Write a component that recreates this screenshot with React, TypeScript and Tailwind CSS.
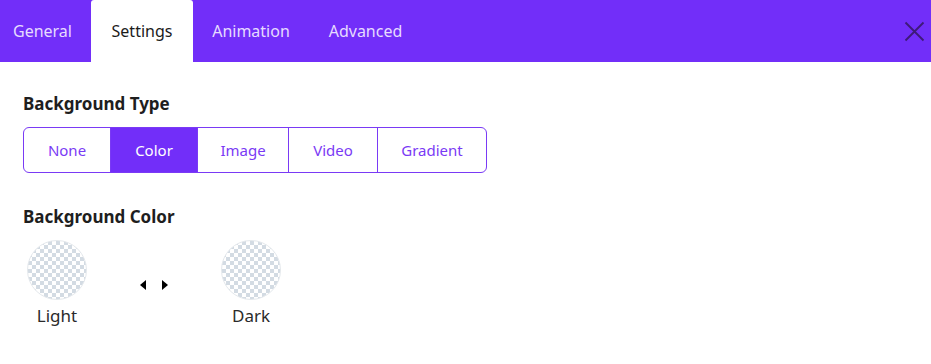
import { useState } from "react"

const tabs = [
	{ label: "General", w: "w-[97px]" },
	{ label: "Settings", w: "w-[102px]" },
	{ label: "Animation", w: "w-[116px]" },
	{ label: "Advanced", w: "w-[113px]" }
]

const bgTypes = [
	{ label: "None", w: "w-[86px]" },
	{ label: "Color", w: "w-[87px]" },
	{ label: "Image", w: "w-[91px]" },
	{ label: "Video", w: "w-[89px]" },
	{ label: "Gradient", w: "w-[109px]" }
]

const Swatch = ({ label }: { label: string }) => (
	<div className="flex flex-col items-center w-[60px]">
		<div className="w-[60px] h-[60px] rounded-full border border-[#e4e8ec] bg-[conic-gradient(#d3dbe3_25%,#ffffff_0_50%,#d3dbe3_0_75%,#ffffff_0)] bg-size-[8px_8px]" />
		<span className="mt-[4px] text-[17px] leading-[24px] text-[#2a2a2a]">
			{label}
		</span>
	</div>
)

const App = () => {
	const [activeTab, setActiveTab] = useState("Settings")
	const [bgType, setBgType] = useState("Color")

	return (
		<div className="w-[931px] h-[364px] bg-white font-['Noto_Sans','Open_Sans',sans-serif] overflow-hidden">
			<div className="h-[62px] bg-[#722ef9] flex items-stretch justify-between">
				<div className="flex items-stretch -ml-[6px]">
					{tabs.map(tab => (
						<button
							key={tab.label}
							onClick={() => setActiveTab(tab.label)}
							className={`${tab.w} pb-[1px] text-[16px] rounded-t-[3px] ${
								activeTab === tab.label
									? "bg-white text-[#1b1b1b]"
									: "text-[#e6dbff]"
							}`}
						>
							{tab.label}
						</button>
					))}
				</div>
				<button className="w-[40px] flex items-center justify-center">
					<svg
						width="21"
						height="21"
						viewBox="0 0 21 21"
						className="ml-[6px] stroke-[#3d1a78]"
						strokeWidth="1.8"
					>
						<path d="M1.5 1.5 L19.5 19.5 M19.5 1.5 L1.5 19.5" />
					</svg>
				</button>
			</div>

			<div className="px-[23px] pt-[30px]">
				<h3 className="text-[17px] font-bold text-[#1e1e1e] leading-[24px]">
					Background Type
				</h3>
				<div className="mt-[11px] flex w-max border border-[#7a3af5] rounded-[6px] overflow-hidden">
					{bgTypes.map((t, i) => (
						<button
							key={t.label}
							onClick={() => setBgType(t.label)}
							className={`${t.w} h-[44px] text-[15px] ${
								i > 0 ? "border-l border-[#7a3af5]" : ""
							} ${
								bgType === t.label
									? "bg-[#722ef9] text-white"
									: "text-[#7a3af5]"
							}`}
						>
							{t.label}
						</button>
					))}
				</div>

				<h3 className="mt-[32px] text-[17px] font-bold text-[#1e1e1e] leading-[24px]">
					Background Color
				</h3>
				<div className="mt-[11px] ml-[4px] flex items-center gap-[53px]">
					<Swatch label="Light" />
					<div className="flex items-center gap-[16px] pt-[1px]">
						<svg width="6" height="10" viewBox="0 0 6 10">
							<path d="M6 0 L0 5 L6 10 Z" fill="#000" />
						</svg>
						<svg width="6" height="10" viewBox="0 0 6 10">
							<path d="M0 0 L6 5 L0 10 Z" fill="#000" />
						</svg>
					</div>
					<Swatch label="Dark" />
				</div>
			</div>
		</div>
	)
}

export default App
